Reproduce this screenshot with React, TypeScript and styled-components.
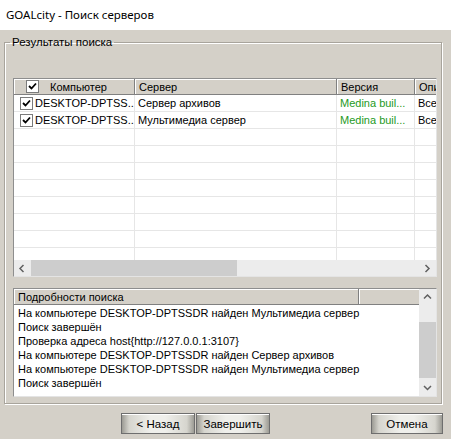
import styled, { createGlobalStyle } from "styled-components";

const GlobalStyle = createGlobalStyle`
  html, body {
    margin: 0;
    padding: 0;
  }
  body {
    background: #d4d0c8;
    font-family: "Liberation Sans", Arial, sans-serif;
    font-size: 11px;
    color: #000;
  }
`;

const servers = [
  { pc: "DESKTOP-DPTSS...", server: "Сервер архивов", version: "Medina buil...", desc: "Все серверы" },
  { pc: "DESKTOP-DPTSS...", server: "Мультимедиа сервер", version: "Medina buil...", desc: "Все серверы" },
];

const log = [
  "На компьютере DESKTOP-DPTSSDR найден Мультимедиа сервер",
  "Поиск завершён",
  "Проверка адреса host{http://127.0.0.1:3107}",
  "На компьютере DESKTOP-DPTSSDR найден Сервер архивов",
  "На компьютере DESKTOP-DPTSSDR найден Мультимедиа сервер",
  "Поиск завершён",
];

const columns = [
  { title: "Компьютер", width: 121 },
  { title: "Сервер", width: 202 },
  { title: "Версия", width: 78 },
  { title: "Описание", width: 90 },
];

const Window = styled.div`
  width: 451px;
  height: 439px;
  display: flex;
  flex-direction: column;
  overflow: hidden;
`;

const TitleBar = styled.div`
  height: 30px;
  background: #fff;
  display: flex;
  align-items: center;
  padding-left: 6px;
  font-family: "Noto Sans", sans-serif;
  font-size: 11.5px;
  padding-bottom: 2px;
  box-sizing: border-box;
`;

const GroupBox = styled.fieldset`
  margin: 5px 9px 0 4px;
  padding: 0 4px 6px 8px;
  border: 1px solid #a8a49c;
  box-shadow: inset 1px 1px 0 #fff, 1px 1px 0 #fff;
  min-width: 0;
`;

const Legend = styled.legend`
  margin-left: -3px;
  padding: 0 2px;
  line-height: 14px;
  font-size: 11.5px;
`;

const ListView = styled.div`
  margin-top: 29px;
  height: 199px;
  box-sizing: border-box;
  border: 1px solid #8e8e8e;
  border-right-color: #e4e4e4;
  border-bottom-color: #e4e4e4;
  background: #fff;
  display: flex;
  flex-direction: column;
  overflow: hidden;
`;

const GridArea = styled.div`
  flex: 1;
  overflow: hidden;
`;

const Row = styled.div<{ $header?: boolean }>`
  display: flex;
  height: ${(p) => (p.$header ? 16 : 17)}px;
  box-sizing: border-box;
  border-bottom: 1px solid ${(p) => (p.$header ? "#808080" : "#e6e6e6")};
  background: ${(p) => (p.$header ? "#d4d0c8" : "#fff")};
`;

const Cell = styled.div<{ $w: number; $header?: boolean; $green?: boolean }>`
  flex: 0 0 ${(p) => p.$w}px;
  box-sizing: border-box;
  display: flex;
  align-items: center;
  gap: 2px;
  padding-left: ${(p) => (p.$header ? 4 : 3)}px;
  white-space: nowrap;
  overflow: hidden;
  color: ${(p) => (p.$green ? "#1e9a1e" : "#000")};
  border-right: 1px solid ${(p) => (p.$header ? "#808080" : "#e6e6e6")};
  box-shadow: ${(p) => (p.$header ? "inset 1px 1px 0 #fff" : "none")};
`;

const Check = styled.span<{ $header?: boolean }>`
  flex: 0 0 auto;
  width: 11px;
  height: 11px;
  border: 1px solid #7b7b7b;
  background: #fff;
  display: inline-flex;
  align-items: center;
  justify-content: center;
  margin-left: ${(p) => (p.$header ? 8 : 3)}px;
  margin-right: ${(p) => (p.$header ? 9 : 0)}px;
`;

const HScroll = styled.div`
  height: 16px;
  flex: 0 0 16px;
  display: flex;
  background: #ececec;
`;

const ArrowBox = styled.div`
  flex: 0 0 17px;
  height: 16px;
  display: flex;
  align-items: center;
  justify-content: center;
  background: #ececec;
`;

const HTrack = styled.div`
  flex: 1;
  display: flex;
`;

const HThumb = styled.div`
  width: 206px;
  background: #cdcdcd;
`;

const LogView = styled.div`
  margin-top: 11px;
  height: 109px;
  box-sizing: border-box;
  border: 1px solid #8e8e8e;
  border-right-color: #e4e4e4;
  border-bottom-color: #e4e4e4;
  background: #fff;
  display: flex;
  overflow: hidden;
`;

const LogMain = styled.div`
  flex: 1;
  min-width: 0;
  display: flex;
  flex-direction: column;
`;

const LogLines = styled.div`
  padding: 1px 0 0 4px;
  line-height: 14px;
  white-space: nowrap;
`;

const VScroll = styled.div`
  flex: 0 0 17px;
  display: flex;
  flex-direction: column;
  background: #ececec;
`;

const VTrack = styled.div`
  flex: 1;
  display: flex;
  flex-direction: column;
  padding-top: 16px;
`;

const VThumb = styled.div`
  height: 56px;
  background: #cdcdcd;
`;

const Footer = styled.div`
  display: flex;
  margin-top: 9px;
  padding: 0 8px 0 121px;
`;

const Button = styled.button<{ $w?: number }>`
  width: ${(p) => p.$w ?? 74}px;
  height: 21px;
  padding: 0;
  border: 1px solid #6e6e6e;
  font: inherit;
  font-size: 11.5px;
  color: #000;
  background: linear-gradient(
    to right,
    #9c9b94 0,
    #d6d5ce 10%,
    #efefeb 40%,
    #efefeb 60%,
    #d6d5ce 90%,
    #9c9b94 100%
  );
  box-shadow: inset 0 1px 0 #fff;
  & + & {
    margin-left: 1px;
  }
`;

const Spacer = styled.div`
  flex: 1;
`;

const Tick = () => (
  <svg width="9" height="9" viewBox="0 0 9 9">
    <path d="M1 4 L3.5 6.5 L8 1.5" fill="none" stroke="#000" strokeWidth="1.8" />
  </svg>
);

const Chevron = ({ dir }: { dir: "left" | "right" | "up" | "down" }) => {
  const paths = {
    left: "M5.5 1 L2 4.5 L5.5 8",
    right: "M2.5 1 L6 4.5 L2.5 8",
    up: "M1 5.5 L4.5 2 L8 5.5",
    down: "M1 3 L4.5 6.5 L8 3",
  };
  return (
    <svg width="9" height="9" viewBox="0 0 9 9">
      <path d={paths[dir]} fill="none" stroke="#606060" strokeWidth="1.5" />
    </svg>
  );
};

export default function App() {
  return (
    <Window>
      <GlobalStyle />
      <TitleBar>GOALcity - Поиск серверов</TitleBar>
      <GroupBox>
        <Legend>Результаты поиска</Legend>
        <ListView>
          <GridArea>
            <Row $header>
              {columns.map((c, i) => (
                <Cell key={c.title} $w={c.width} $header>
                  {i === 0 && (
                    <Check $header>
                      <Tick />
                    </Check>
                  )}
                  {c.title}
                </Cell>
              ))}
            </Row>
            {servers.map((s, i) => (
              <Row key={i}>
                <Cell $w={columns[0].width}>
                  <Check>
                    <Tick />
                  </Check>
                  {s.pc}
                </Cell>
                <Cell $w={columns[1].width}>{s.server}</Cell>
                <Cell $w={columns[2].width} $green>
                  {s.version}
                </Cell>
                <Cell $w={columns[3].width}>{s.desc}</Cell>
              </Row>
            ))}
            {Array.from({ length: 8 }).map((_, i) => (
              <Row key={"e" + i}>
                {columns.map((c) => (
                  <Cell key={c.title} $w={c.width} />
                ))}
              </Row>
            ))}
          </GridArea>
          <HScroll>
            <ArrowBox>
              <Chevron dir="left" />
            </ArrowBox>
            <HTrack>
              <HThumb />
            </HTrack>
            <ArrowBox>
              <Chevron dir="right" />
            </ArrowBox>
          </HScroll>
        </ListView>
        <LogView>
          <LogMain>
            <Row $header>
              <Cell $w={345} $header>
                Подробности поиска
              </Cell>
              <Cell $w={63} $header />
            </Row>
            <LogLines>
              {log.map((line, i) => (
                <div key={i}>{line}</div>
              ))}
            </LogLines>
          </LogMain>
          <VScroll>
            <ArrowBox>
              <Chevron dir="up" />
            </ArrowBox>
            <VTrack>
              <VThumb />
            </VTrack>
            <ArrowBox>
              <Chevron dir="down" />
            </ArrowBox>
          </VScroll>
        </LogView>
      </GroupBox>
      <Footer>
        <Button>&lt; Назад</Button>
        <Button>Завершить</Button>
        <Spacer />
        <Button $w={72}>Отмена</Button>
      </Footer>
    </Window>
  );
}
